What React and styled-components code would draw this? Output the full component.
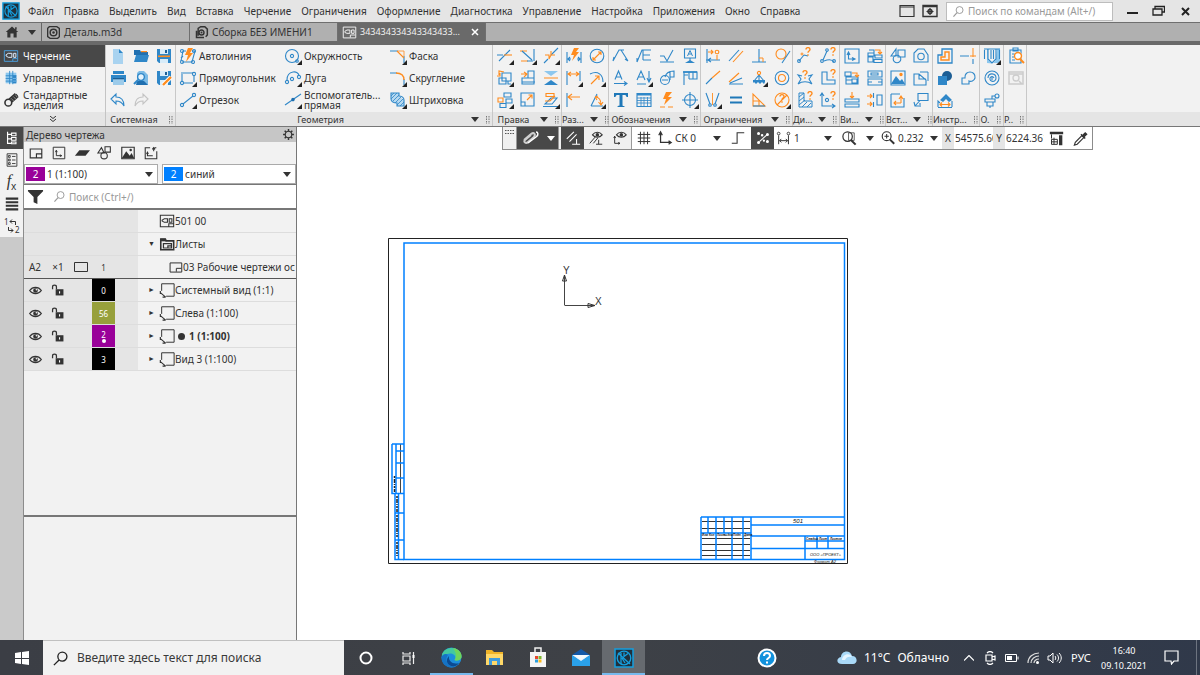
import React from 'react';
import styled, { createGlobalStyle, css } from 'styled-components';

const BLUE = '#2f87c8';
const SKY = '#a9d3f0';
const ORANGE = '#ff8c1e';
const INK = '#333333';
const LINE = '#0080ff';

const GlobalStyle = createGlobalStyle`
  * { box-sizing: border-box; }
  body {
    margin: 0;
    font-family: "Noto Sans", "Open Sans", sans-serif;
    font-size: 10px;
    line-height: 14px;
    color: ${INK};
  }
  button, input, select { font: inherit; color: inherit; }
`;

/* ---------- icon set ---------- */

const ring = (x, y, r) => `M${x - r} ${y}a${r} ${r} 0 1 0 ${2 * r} 0a${r} ${r} 0 1 0 ${-2 * r} 0`;
const box = (x, y, w, h) => `M${x} ${y}h${w}v${h}h${-w}z`;
const s = (stroke, d, width = 1.1) => ({ stroke, d, width, fill: 'none' });
const f = (fill, d) => ({ fill, d, stroke: 'none' });
const b = (d, w) => s(BLUE, d, w);
const o = (d, w) => s(ORANGE, d, w);
const k = (d, w) => s(INK, d, w);
const quest = (x, y) => o(`M${x} ${y + 1.5}c0-2.5 4-2.5 4 0c0 1.5-2 1.5-2 3.2M${x + 2} ${y + 6.2}v1.6`, 1.4);

const ICONS = {
  newFile: [f('#a9d3f0', 'M4 2h6l4 4v11H4z'), f(BLUE, 'M10 2l4 4h-4z')],
  open: [f('#1f6fb0', 'M2 3h6l1 2h7v3H2z'), f(BLUE, 'M4 8h13l-2 7H2z'), f(ORANGE, 'M9 4h6v1.2H9z')],
  save: [f(BLUE, 'M2 2h14v14H4l-2-2z'), f('#d8ecf9', 'M5 2h8v5H5z'), f('#1c5e95', 'M10 3h2v3h-2z'), f(ORANGE, 'M3 8.5h12v1.6H3z'), f('#d8ecf9', 'M5 12h8v4H5z')],
  saveAs: [f(BLUE, 'M2 2h14v14H4l-2-2z'), f('#d8ecf9', 'M5 2h8v5H5z'), f('#1c5e95', 'M10 3h2v3h-2z'), f('#d8ecf9', 'M5 11h8v5H5z'), s('#fff', 'M8 16L16 8', 4), o('M8 16L16 8', 2.4)],
  print: [f(BLUE, 'M4 2h11v3H4z'), f(BLUE, 'M2 6h15v7H2z'), f('#9ccbea', 'M4 10h11v6H4z'), f('#1c5e95', 'M4 9h11v1.3H4z')],
  preview: [f('#7cbbe6', 'M7 2h5l4 4v10H5V4z'), f('#1f6fb0', 'M5 12h7l4 4H4z'), f('#e5f3fc', ring(9, 8, 3.4)), b(ring(9, 8, 3.4), 1.4), b('M6 11l-4 4', 2)],
  undo: [b('M2 8l5-5v3c6 0 8 4 8 9c-2-4-4-5-8-5v3z')],
  redo: [s('#c4c4c4', 'M16 8l-5-5v3c-6 0-8 4-8 9c2-4 4-5 8-5v3z')],
  drafting: [s('#4b9fdc', box(1.5, 3, 15, 12)), s('#dfefff', 'M3.500 7.500l2.500-1.500h4v4.500H6L3.500 9zM12 6v4.500h2.500V6z'), s('#4b9fdc', 'M11 15v-3h5')],
  manage: [f('#8cc7ee', 'M3 3h12v12H3z'), b('M7.500 1v15M11 1v15M3 6.500h12M3 9.500h12M3 12.500h12', 1), f('#2f87c8', 'M11 6h4v9h-4z'), s('#8cc7ee', 'M11 9.500h4M11 12.500h4', 0.8)],
  standard: [s(INK, ring(6, 12, 3.8), 1.8), s(INK, 'M7 8l7-6M10 11l7-6', 2), s(INK, 'M9 9l7-6', 3), s('#999', 'M9 7l3 3M11.500 5l3 3M14 3l2 3', 0.9)],
  autoline: [b('M2 14L4 4h3M3 15h10l3-11h-3M4 9l-2 2'), b(ring(3, 4, 1.5)), b(ring(15, 4, 1.5)), b(ring(3, 15, 1.5)), b(ring(14, 15, 1.5)), f(ORANGE, 'M9 1h5l-3 5h3l-7 9l2-7H6z')],
  rect: [b('M2 4h12M3 5v8M5 14h9M15 6v7'), b(ring(3, 14, 1.6)), b(ring(15, 5, 1.6))],
  segment: [b('M4 13L14 5'), b(ring(3, 14, 1.6)), b(ring(15, 4, 1.6))],
  circle: [b(ring(8, 9, 6.5)), b(ring(8, 9, 1.6)), b(ring(13, 14, 1.3))],
  arc: [b('M3 11C3 1 15 1 15 7'), b(ring(3, 13, 1.6)), b(ring(15, 8, 1.6)), b(ring(8, 10, 1.6))],
  auxLine: [b('M1 14L17 3'), f('#1f6fb0', ring(9, 8.6, 1.8))],
  chamfer: [b('M1 4h8M15 9v7'), o('M8 4l7 7'), o('M9 4h6v5', 0.8)],
  fillet: [b('M1 4h7M15 10v6'), o('M7 4c5 0 8 2 8 7', 1.3)],
  hatch: [f('#b5d8f0', 'M2 2h8v3l5 4v6H8v-3c-3 0-6-1-6-4z'), b('M2 2h8v3c2 0 5 1 5 4v6H8v-3c-3 0-6-1-6-4z'), b('M2 5l3-3M2 8l6-6M4 10l6-6M6 12l6-6M8 14l6-6M11 15l4-4', 0.8)],
  trim: [b('M1 8h6M3 14L14 3'), o('M8 8h8')],
  extend: [o('M1 4h7M2 14h7'), b('M3 4l10 9M15 2v12M8 14h6')],
  split: [b('M2 16l4-4M9 8l7-7'), o('M3 8h4v4M9 4v4h4M7 12l2-4')],
  copyMove: [b('M6 4h9v8H6zM3 9h7v6H3z'), o('M3 6V2l5 1M1 7h3V4'), b('M12 12v3h3')],
  moveBy: [b('M9 2h6v13H3V9h6zM3 13h13M9 9h6'), o('M2 5h6M5 3l3 2-3 3')],
  mirror: [f('#8cc7ee', 'M2 2h14l-7 5z'), o('M2 9h14', 1), f(BLUE, 'M2 16h14l-7-5z')],
  array: [b('M8 2h7v4H8zM10 8h6v4h-6z'), o('M2 7h5v4H2z'), b('M4 12.500h6v4H4z')],
  scale: [b('M2 2h13v13H2zM2 11h4v4'), o('M8 9l5-5M9.500 4h3.500v3.500')],
  deform: [b('M1 15.500h15M3 13h7l5-6H9z'), o('M3 10h5l5-5M4 2.500h8v3H4z')],
  dimAuto: [b('M2 5v11M16 5v11M3 12h3M12 12h3M5 10l-2 2 2 2M13 10l2 2-2 2'), f(ORANGE, 'M9 1h5l-3 4h3l-7 9l2-6H6z')],
  diameter: [b(ring(9, 9, 6.8)), o('M5 13l8-8M5 10v3h3M10 5h3v3')],
  dimLinear: [b('M2 2v14M15 2v10'), o('M3 5h11M6 3L3 5l3 2M11 3l3 2-3 2')],
  dimRadius: [b('M2 5c8-4 13 1 13 8'), o('M3 15l8-8M7 7h4v4')],
  dimBase: [b('M2 2v14'), o('M3 6h12M7 3L3 6l4 3')],
  dimAngle: [b('M3 15L9 3M3 15h12'), o('M7 6c5 0 6 4 6 8M10.500 11l2.500 3 2-3M7 6l3-1M7 6l2 3')],
  leader: [b('M1 14L7 3h5M9 3l7 11M1 14l1-4M16 14l-3-2')],
  leaderE: [b('M2 15L7 3h9M8 3v10M8 8h7M8 13h8M2 15v-4')],
  rough: [b('M2 9h4l3 5L15 3M2 15h14')],
  datum: [b('M3.500 2h11v9h-11zM9 11v3'), f(BLUE, 'M4 16l5-3 5 3z'), b('M6.500 9L9 3.500 11.500 9M7.500 7h3', 1)],
  viewArrow: [b('M3 10.500L6.500 2 10 10.500M4 8h5'), b('M2 14.500h13M12 12.500l3 2-3 2')],
  textArrow: [b('M2 11L6 2l4 9M3.500 8h5M14 2v10M12 9l2 4 2-4M2 15h9')],
  node: [b(ring(7, 11, 4.5)), b('M4 11h6M7 8c1-4 5-6 9-6v6h-4M12 2v9')],
  table: [b('M3 16V3h13v7H8M8 3v7M12 3v7M3 6h4'), b('M2 3h14', 1.6)],
  text: [f('#1f78b8', 'M2 2h14v4h-1.500c-.2-1.500-1-2-2-2H10.500v10c0 1 .5 1 2 1.200V16h-7v-.8c1.500-.2 2-.2 2-1.200V4H5.500c-1 0-1.800.5-2 2H2z')],
  grid: [b('M2 2.500h14v13H2z'), f(BLUE, 'M2 2h14v2.500H2z'), b('M2 7h14M2 9.500h14M2 12h14M6 6v10M9 6v10M12.500 6v10', 0.8)],
  bolt: [f(ORANGE, 'M8 1h6l-4 5h4l-8 8l2-6H5z'), o('M2 16h5M10 16h5', 1)],
  target: [b(ring(9, 9, 5.5)), b('M9 1v16M1 9h16')],
  cDim: [b('M3 2v14M2 13h14M7 11l-3 2 3 2'), o('M4 5h5M7 3l2 2-2 2M13 8v5'), o(ring(13, 5, 1.8))],
  parallel: [b('M2 14L12 3'), o('M6 15L16 4')],
  perp: [b('M2 15h14M9 2v13'), o('M9 11h4v4', 1)],
  tangent: [o(ring(8, 7, 5)), b('M9 16L17 4')],
  coincide: [b('M2 15l6-6'), o('M8 9l8-7')],
  angle: [b('M2 15h14M3 14l12-5'), o('M2 13L12 4')],
  fix: [b('M4 12l5-6 5 6M9 6v5'), f(BLUE, 'M3 11h12v2l-1 2-2-2-2 2-2-2-2 2-2-2-1 1z'), o(ring(9, 4, 1.6))],
  concentric: [b(ring(9, 9, 6.8)), o(ring(9, 9, 3.5))],
  symmetry: [b('M2 2l4 11M15 2l-4 11'), b(ring(6, 14, 1.3)), b(ring(11, 14, 1.3)), s(ORANGE, 'M8.500 2v12', 0.9)],
  equal: [s('#1f78b8', 'M3 6.500h12M3 11.500h12', 2)],
  triangle: [o('M3 3v12h12zM3 10h6v5'), b('M3 15h12')],
  questCircle: [o(ring(9, 9, 7)), quest(7, 4), o('M4 14L14 4')],
  qPoint: [b('M3 14l5-6M8 8l4 1'), b(ring(3, 14, 1.4)), quest(10, 1), s(ORANGE, ring(6, 7, 1), 1)],
  qPath: [b('M4 13L8 4M5 14c5-2 8-2 10 1'), b(ring(3, 14, 1.4)), b(ring(8, 3, 1.3)), b(ring(15, 14, 1.4)), quest(12, 1)],
  qStar: [b('M2 15l3-5-3-4 4 1M16 15l-3-5 3-4-4 1M2 15c4-3 10-3 14 0'), quest(7, 2)],
  qShape: [b('M3 3h5v8h8v4H3z'), quest(12, 1)],
  qHatch: [b('M3 2h5v8h8v6H3zM3 6l5-4M3 10l5-4M3 14l6-5M6 16l5-5M11 16l4-4', 1), quest(12, 1)],
  qAxis: [b('M3 3v12h13M1 5l2-3 2 3M13 13l3 2-3 2'), b(ring(8, 9, 1.6)), quest(12, 1)],
  viewNew: [b('M2 2h14v14H2zM5.500 6v6h6M4 8l1.500-3L7 8M9 10.500l3 1.500-3 1.500')],
  views: [b('M2 6h6v3H2zM2 10h5v5H2zM9 8h7v3H9zM8 12.500h8v3H8zM3 3h5v3'), o('M9 3h5v3M12 5l2 2 2-2')],
  viewArrange: [b('M2 3h6v4H2zM3 8h12v7H3zM9 10h5v4H9zM3 11h6'), o('M9 4h5v3M12 6l2 2 2-2')],
  viewSection: [b('M2 2h14v6H2zM5 4h7v2H5zM2 10h14v6H2zM2 13h4M12 13h4')],
  align: [b('M2 8h14v3H2zM2 13h14v3H2z'), o('M9 1v6M7 5l2 2 2-2')],
  alignH: [b('M11 4h5v10h-5zM7.500 2v5M7.500 11v5'), o('M1 5h5M4 3l2 2-2 2M1 13h5M4 11l2 2-2 2')],
  shapes: [b('M2 9l5-7v7zM9 3h7v7H9z'), b(ring(8, 12, 3.8))],
  macro: [b('M2 15V6l4-4h6l4 6v7z'), b(ring(9, 9.5, 3.2))],
  picture: [b('M2 2h14v14H2z'), f(BLUE, 'M2 15l5-8 4 5 2-2 3 5z'), f(ORANGE, ring(12, 5.5, 1.7))],
  fragment: [b('M2 5h5l7 6v5H2zM7 5v5h7'), s(BLUE, 'M8 3h8v9', 1)],
  insertView: [b('M2 3h9M2 3v13h13V7'), o('M5 12h7M12 6v6M10 8l2-3 2 3M7 10l-2 2 2 2')],
  frameLead: [b('M6 2.500h10v7H6zM8 9.500L3 15M2 11l1 4h4M8 12v4')],
  equid: [b('M2 16V8h4V2h10v14z', 1.3), o('M5 13h8V5H9v5H5z', 1.4)],
  extendTo: [b('M1 9h9M14 12v5'), o('M14 1v9M11 9h6', 1)],
  union: [f('#1c5e95', ring(11, 7, 5)), f(BLUE, 'M2 7h9v9H2z')],
  contour: [b('M3 15V9h3c-1-8 11-8 10 0c-1 3-4 4-6 3v3z')],
  measure: [f(BLUE, 'M4 9l6-6 6 6-3 2-3-3-3 3z'), b('M2 16V10l2 2M16 16v-6M2 16.500h14'), o('M4 13.500h10M6 11.500l-2 2 2 2M12 11.500l2 2-2 2')],
  hole: [f('#8cc7ee', 'M1 2h3v14l5 .5L5 13V2zM14 2h3v14H10l3-3z'), b('M1 2h16M5 2v10l4 4 4-4V2M1.500 3v9M16.500 3v9M8 3v9M10.500 3v9')],
  spiral: [b(ring(9, 9, 7)), b('M5 9c0-6 8-5 8 0s-7 4-6 0c1-2 3-2 4 0M9 7v4')],
  shaft: [b('M2 8h10v3H2zM4 11v4h6v-4M7 15v2M9 8V5h3'), b(ring(14, 5, 2))],
  report: [b('M3 3h11v13H3zM6 1h5v3H6zM5 7h4M5 10h3M5 13h3'), f('#fff', ring(11, 9, 4)), o(ring(11, 9, 3.5), 1.4), o('M13 12l4 4', 2)],
  reportOff: [s('#cccccc', 'M2 3h14v12H2zM2 5h14M12 12l3 3', 1.5), s('#cccccc', ring(9, 9, 3), 1.3)],
  /* side panel and status strip */
  sheet: [k('M2.500 4.500h13v10h-13zM9.500 14v-4h6', 1.3)],
  boxAxis: [k('M2.500 2.500h13v13h-13zM6 6v6h6M5 8l1-2 1 2M10 11l2 1-2 1', 1.1)],
  layer: [f(INK, 'M6 6h12l-5 6H1z')],
  shapesK: [k('M1 9l4-6 3 6zM9 2h6v6H9z', 1.2), k(ring(8, 12, 3.6), 1.2)],
  pictureK: [k('M2 2.500h14v13H2z', 1.3), f(INK, 'M2 15l5-8 4 5 2-3 3 6z'), f(INK, ring(12, 5.5, 1.4))],
  insertK: [k('M8 3H2.500v12.500h13V7M5 9v3h6M4 10l1-2 1 2M12 7V3M10.500 5L12 3l1.500 2M13 3h2', 1.2)],
  gear: [k(ring(9, 9, 4.5), 1.5), k('M9 1.500v3M9 13.500v3M1.500 9h3M13.500 9h3M3.700 3.700l2 2M12.300 12.300l2 2M14.300 3.700l-2 2M5.700 12.300l-2 2', 2)],
  filter: [f(INK, 'M1 2h16v1.500l-6 6V17l-4-2V9.500l-6-6z')],
  search: [s('#999999', ring(10.5, 7, 4.8), 1.3), s('#999999', 'M7 10.500L2 16', 1.6)],
  treeTab: [s('#ffffff', 'M4 2v13h4M4 5h4M4 10h4', 1.3), s('#ffffff', 'M8.500 3.500h5v3h-5zM8.500 8.500h5v3h-5zM8.500 13.500h5v2h-5z', 1.2)],
  params: [k('M3.500 2h11v14h-11zM9 5h4M9 9h4M9 13h4', 1), k(box(5, 4, 2, 2), 1), k(box(5, 8, 2, 2), 1), k(box(5, 12, 2, 2), 1)],
  bars: [k('M2 3h14M2 7h14M2 11h14M2 15h14', 2.4)],
  doc: [k('M1.500 2.500h15v13h-15zM3.500 8L6 6.500h3.500v4H6L3.500 9zM11.500 6.500h3v4h-3zM11 15v-3h5', 1.2)],
  folder: [k('M2 3.500h5l1 2h8.500v10H2z', 1.8), k('M5 8.500h9v5H5zM10 13v-2h4', 1.4), f(INK, 'M2 3h6v3H2z')],
  page: [k('M2.500 3.500h14v11h-14zM10 14v-4h6', 1.2)],
  view: [k('M3 10V2h14v14H8', 1.1), k('M1.500 10v3.500M1.500 12l6 5M4 17h3.500', 1.3)],
  emptyBox: [k('M2.500 4.500h13v9h-13z', 1)],
  eye: [k('M2 9c3.500-5 10.500-5 14 0c-3.500 5-10.500 5-14 0z', 1.5), f(INK, ring(9, 9, 2.8)), f('#fff', ring(10, 8, 0.9))],
  lock: [k('M2 8V5c0-3 5-3 5 0v3', 1.6), f(INK, 'M6 8h10v8H6z'), f('#fff', 'M10.300 10.500h1.400v3h-1.400z')],
  clip: [s('#cfcfcf', 'M3 11l7-6c3-2 5 0 3 3l-6 5c-2 2-5 0-3-2l6-5', 2), s('#ffffff', 'M7 14l8-6c3-2 2-5 0-5', 1.5)],
  para: [s('#fff', 'M2 10L10 2M5 13l8-8M8 16h9M13 10v6', 1.2)],
  eyePara: [k('M2 15L8 8M6 15l5-6M9 16h7M12 11v5', 1.1), k('M5 5.500c3-4 8-4 11 0c-3 3.500-8 3.500-11 0z', 1.2), f(INK, ring(10.5, 5.5, 2))],
  eyeAxis: [k('M3 7v8h6M2 9l1-2 1 2M7 14l2 1-2 1', 1.1), k('M5 5.500c3-4 8-4 11 0c-3 3.500-8 3.500-11 0z', 1.2), f(INK, ring(10.5, 5.5, 2))],
  hash: [k('M5 2v14M9 2v14M13 2v14M2 5h14M2 9h14M2 13h14', 1.1)],
  axis: [k('M4 3v11h12M2 6l2-4 2 4M13 12l3 2-3 2', 1.4)],
  step: [k('M2 15h6V3h8', 1.2)],
  snap: [s('#fff', 'M5 13L14 5', 1.2), f('#fff', ring(4, 4, 1.7)), f('#fff', ring(8, 6, 1.4)), f('#fff', ring(4, 14, 1.7)), f('#fff', ring(14, 5, 1.7)), f('#fff', ring(14, 13, 1.7)), f('#fff', ring(10, 12, 1.3))],
  stepDim: [k('M3 6v10M14 6v10M4 12h9M6 10l-2 2 2 2M11 10l2 2-2 2', 1.1), k(ring(3, 4, 1.5), 1), k(ring(14, 4, 1.5), 1)],
  zoomArea: [k(ring(7, 7, 5), 1.3), k('M10.500 10.500l5 5', 2.2), k('M8 3h6v8H8z', 0.8)],
  zoomPlus: [k(ring(7.5, 7, 5), 1.3), k('M11 10.500l5 5', 2.2), k('M5 7h5M7.500 4.500v5', 1.2)],
  caliper: [f(INK, 'M1 1h16v3H1zM12 5h4v12h-4z'), k('M3 4v5M6 8v8M3 10h7v6H3zM3 13h7', 1.2)],
  dropper: [k('M2.500 16l1-3 7-7 2 2-7 7z', 1.2), f(INK, 'M9 5l1-1 1 1 3-3 2.500 2.500-3 3 1 1-1 1z')],
  cmdWindow: [k('M2 3.500h14v11H2zM2 5h14', 1.2)],
  cmdGear: [k('M2 3.500h14v11H2zM2 4.500h14', 1.4), k(ring(9, 9.5, 2), 1.4), k('M9 6v7M5.500 9.500h7', 1.2)],
  home: [f(INK, 'M9 2l8 7h-2v7h-4v-5H7v5H3V9H1zM13 3h2v3h-2z')],
  partFile: [k('M4 2h9l3 2v10l-2 2H5l-3-2V4z', 1.6), k(ring(9, 9, 4), 1.8), f(INK, ring(9, 9, 1.5))],
  asmFile: [k('M3 7v8h9M5 13V4l3-2h5l3 3v7l-2 2', 1.8), k(ring(9, 9, 3), 1.7), f(INK, ring(9, 9, 1.2))],
  drawFile: [s('#eeeeee', 'M1.500 2.500h15v13h-15zM3.500 7.500L6 6h3.500v4H6L3.500 9zM11.500 6h3v4h-3zM10 15v-3h6', 1.2)],
};

const Svg = styled.svg`
  display: block;
  flex: none;
`;

function Icon({ name, size = 18, corner }) {
  return (
    <Svg width={size} height={size} viewBox="0 0 18 18" aria-hidden="true">
      {ICONS[name].map((p, i) => (
        <path key={i} d={p.d} fill={p.fill} stroke={p.stroke} strokeWidth={p.width} />
      ))}
      {corner && <path d="M18 13v5h-5z" fill="#222222" />}
    </Svg>
  );
}

function Arrow({ color = INK }) {
  return (
    <Svg width="8" height="5" viewBox="0 0 8 5" aria-hidden="true">
      <path d="M0 0h8L4 5z" fill={color} />
    </Svg>
  );
}

function Grip() {
  return (
    <Svg width="5" height="8" viewBox="0 0 5 8" aria-hidden="true">
      <path d="M1.500 0v8M4 0v8" stroke="#777777" strokeDasharray="1.500 1" />
    </Svg>
  );
}

function KompasMark({ size }) {
  return (
    <Svg width={size} height={size} viewBox="0 0 20 20" aria-hidden="true">
      <rect x="1" y="1" width="18" height="18" fill="#20303c" stroke="#159fdf" strokeWidth="1.500" />
      <circle cx="10" cy="10" r="6.800" fill="none" stroke="#159fdf" strokeWidth="1.300" />
      <path d="M7 5v11M10 4.500v4l4-3M4 5l12 11M8 10l3 5" fill="none" stroke="#159fdf" strokeWidth="1.300" />
    </Svg>
  );
}

/* ---------- page frame ---------- */

const Screen = styled.div`
  display: flex;
  flex-direction: column;
  min-height: 100vh;
  background: #ffffff;
`;

const plain = css`
  display: flex;
  align-items: center;
  border: 0;
  padding: 0;
  background: none;
  text-align: left;
`;

const IconButton = styled.button`
  ${plain}
  justify-content: center;
  width: ${(p) => p.$w || 23}px;
  align-self: stretch;
  flex: none;
  background: ${(p) => (p.$dark ? '#484848' : 'none')};
  gap: 8px;
`;

/* ---------- menu and document tabs ---------- */

const MenuBar = styled.header`
  display: flex;
  align-items: center;
  height: 23px;
  padding: 0 1px 0 2px;
  background: #e5e5e5;
  border-bottom: 1px solid #6f6f6f;
`;

const Menu = styled.nav`
  display: flex;
  gap: 10px;
  margin-left: 8px;
  flex: 1;
`;

const MenuItem = styled.button`
  ${plain}
  white-space: nowrap;
`;

const CommandSearch = styled.label`
  display: flex;
  align-items: center;
  gap: 3px;
  width: 167px;
  height: 19px;
  margin: 0 5px;
  padding-left: 5px;
  background: #ffffff;
  border: 1px solid #bdbdbd;
`;

const PlainInput = styled.input`
  flex: 1;
  min-width: 0;
  width: 100%;
  border: 0;
  padding: 0;
  background: transparent;
  outline: 0;
  &::placeholder { color: #999999; opacity: 1; }
`;

const TabBar = styled.div`
  display: flex;
  height: 22px;
  background: #b0b0b0;
  border-bottom: 4px solid #6a6a6a;
`;

const HomeButton = styled.button`
  ${plain}
  width: 42px;
  padding-left: 5px;
  gap: 9px;
  border-right: 1px solid #666666;
`;

const DocTab = styled.button`
  ${plain}
  width: 148px;
  gap: 3px;
  padding: 0 6px 0 4px;
  white-space: nowrap;
  border-right: 1px solid #6f6f6f;
  background: ${(p) => (p.$active ? '#6a6a6a' : 'transparent')};
  color: ${(p) => (p.$active ? '#f2f2f2' : INK)};
`;

const TabName = styled.span`
  flex: 1;
  font-size: ${(p) => (p.$small ? 9 : 10)}px;
`;

/* ---------- ribbon ---------- */

const Ribbon = styled.div`
  display: flex;
  height: 82px;
  background: linear-gradient(#f2f2f2 67px, #e5e5e5 67px);
  border-bottom: 1px solid #777777;
`;

const Modes = styled.nav`
  display: flex;
  flex-direction: column;
  width: 106px;
  border-right: 1px solid #c4c4c4;
`;

const Mode = styled.button`
  ${plain}
  height: 22px;
  padding-left: 3px;
  gap: 4px;
  line-height: 10px;
  background: ${(p) => (p.$active ? '#484848' : 'none')};
  color: ${(p) => (p.$active ? '#ffffff' : INK)};
`;

const More = styled.button`
  ${plain}
  justify-content: center;
  flex: 1;
`;

const Group = styled.section`
  display: flex;
  flex-direction: column;
  flex: none;
  width: ${(p) => p.$w}px;
  border-right: 1px solid #c8c8c8;
`;

const GroupGrid = styled.div`
  display: grid;
  grid-template-columns: repeat(${(p) => p.$cols}, 23px);
  grid-auto-rows: 22px;
  height: 67px;
`;

const Commands = styled.div`
  display: grid;
  grid-template-columns: repeat(3, 105px);
  grid-auto-rows: 22px;
  height: 67px;
  padding-left: 3px;
`;

const Command = styled.button`
  ${plain}
  gap: 2px;
  line-height: 10px;
`;

const GroupFoot = styled.div`
  display: flex;
  align-items: center;
  flex: 1;
  gap: 6px;
  padding: 1px 2px 0 0;
  font-size: 9px;
  line-height: 12px;
`;

const GroupName = styled.span`
  flex: 1;
  text-align: center;
  white-space: nowrap;
`;

/* ---------- workspace ---------- */

const Workspace = styled.main`
  display: flex;
  flex: 1;
`;

const Rail = styled.nav`
  width: 24px;
  flex: none;
  background: #cacaca;
  border-right: 1px solid #8c8c8c;
`;

const RailButton = styled.button`
  ${plain}
  justify-content: center;
  width: 100%;
  height: 22px;
  background: ${(p) => (p.$active ? '#484848' : '#f2f2f2')};
`;

const Fx = styled.span`
  font: italic 16px/18px "Liberation Serif", serif;
  > sub { font: 10px/10px "Noto Sans", sans-serif; }
`;

const SidePanel = styled.aside`
  display: flex;
  flex-direction: column;
  width: 273px;
  flex: none;
  background: #f2f2f2;
  border-right: 1px solid #777777;
`;

const PanelHead = styled.div`
  display: flex;
  align-items: center;
  justify-content: space-between;
  height: 15px;
  padding: 0 1px 0 2px;
  background: #c6c6c6;
`;

const GearButton = styled.button`
  ${plain}
`;

const PanelTools = styled.div`
  display: flex;
  height: 22px;
`;

const PickerRow = styled.div`
  display: grid;
  grid-template-columns: 134px 1fr;
  gap: 4px;
  height: 21px;
  border-bottom: 1px solid #777777;
`;

const Picker = styled.label`
  display: flex;
  align-items: center;
  padding: 0 4px 0 1px;
  border: 1px solid #aaaaaa;
  background: #ffffff;
`;

const Swatch = styled.span`
  width: 19px;
  height: 14px;
  background: ${(p) => p.$c};
  color: #ffffff;
  text-align: center;
`;

const PlainSelect = styled.select`
  appearance: none;
  flex: 1;
  min-width: 0;
  border: 0;
  padding: 0 0 0 2px;
  background: transparent;
  outline: 0;
`;

const FilterRow = styled.div`
  display: flex;
  align-items: center;
  height: 25px;
  background: #ffffff;
  border-bottom: 2px solid #777777;
`;

const FilterLabel = styled.label`
  display: flex;
  flex: 1;
  align-items: center;
  gap: 3px;
  padding-left: 6px;
`;

const Tree = styled.ul`
  list-style: none;
  margin: 0;
  padding: 0;
  height: 307px;
  border-bottom: 2px solid #777777;
`;

const TreeRow = styled.li`
  display: flex;
  height: 23px;
  border-bottom: 1px solid ${(p) => (p.$rule ? '#555555' : '#dddddd')};
  font-weight: ${(p) => (p.$bold ? 700 : 400)};
`;

const Cells = styled.div`
  display: grid;
  grid-template-columns: 22px 24px 22px 23px;
  align-items: center;
  justify-items: center;
  width: 114px;
  flex: none;
  background: #e5e5e5;
`;

const ColourCell = styled.span`
  display: flex;
  flex-direction: column;
  align-items: center;
  justify-content: center;
  align-self: stretch;
  width: 23px;
  background: ${(p) => p.$c || 'none'};
  color: ${(p) => (p.$c ? '#ffffff' : INK)};
  font-size: 8px;
  line-height: 9px;
  font-weight: 400;
`;

const Dot = styled.i`
  width: 4px;
  height: 4px;
  border-radius: 2px;
  background: #ffffff;
`;

const CurrentMark = styled.i`
  width: 7px;
  height: 7px;
  margin: 0 4px 0 3px;
  border-radius: 4px;
  background: ${INK};
`;

const Name = styled.div`
  display: flex;
  align-items: center;
  flex: 1;
  min-width: 0;
  overflow: hidden;
  white-space: nowrap;
  padding-left: ${(p) => p.$indent}px;
`;

const Twist = styled.span`
  width: 11px;
  font-size: 7px;
`;

/* ---------- canvas ---------- */

const Canvas = styled.section`
  display: flex;
  flex-direction: column;
  align-items: flex-start;
  flex: 1;
  min-width: 0;
`;

const Strip = styled.div`
  display: flex;
  align-items: stretch;
  height: 23px;
  margin: 0 0 88px 205px;
  background: #ffffff;
  border: 1px solid #8c8c8c;
  border-top: 0;
`;

const StripGroup = styled.div`
  display: flex;
  background: ${(p) => (p.$grey ? '#f0f0f0' : 'none')};
  border-right: 1px solid #999999;
`;

const StripPick = styled.label`
  display: flex;
  align-items: center;
  width: ${(p) => p.$w}px;
  padding: 0 4px 0 2px;
`;

const Axis = styled.label`
  display: flex;
  align-items: center;
  width: 51px;
  > span { align-self: stretch; width: 12px; padding-top: 4px; background: #e5e5e5; text-align: center; }
  > input { padding-left: 1px; }
`;

const Sheet = styled.svg`
  display: block;
  margin-left: 91px;
  font-family: "Liberation Sans", sans-serif;
`;

/* ---------- taskbar ---------- */

const Taskbar = styled.footer`
  display: flex;
  align-items: stretch;
  height: 35px;
  color: #ffffff;
  font-size: 12px;
  background: linear-gradient(90deg, #3b3e45, #3e4146 50%, #30394a);
`;

const TaskButton = styled.button`
  ${plain}
  justify-content: center;
  width: 43px;
  flex: none;
  border-bottom: 2px solid ${(p) => (p.$open ? '#76b9ed' : 'transparent')};
  border-top: 2px solid transparent;
  background: ${(p) => (p.$active ? '#666a6f' : 'none')};
`;

const TaskSearch = styled.label`
  display: flex;
  align-items: center;
  gap: 8px;
  width: 301px;
  padding-left: 9px;
  background: #f2f2f2;
  border-top: 1px solid #c0c0c0;
  color: ${INK};
  > input::placeholder { color: #3a3a3a; }
`;

const Tray = styled.div`
  display: flex;
  align-items: center;
  margin: 0 3px 0 auto;
  padding-right: 4px;
  border-right: 1px solid #6d7480;
`;

const TrayItem = styled.button`
  ${plain}
  justify-content: center;
  width: ${(p) => p.$w}px;
  height: 100%;
  gap: 7px;
  white-space: nowrap;
  font-size: ${(p) => (p.$small ? 11 : 12)}px;
`;

const Clock = styled.time`
  width: 52px;
  text-align: center;
  font-size: 9px;
  line-height: 15px;
`;

/* ---------- data ---------- */

const MENU = ['Файл', 'Правка', 'Выделить', 'Вид', 'Вставка', 'Черчение', 'Ограничения', 'Оформление', 'Диагностика', 'Управление', 'Настройка', 'Приложения', 'Окно', 'Справка'];

const COMMANDS = [
  ['autoline', 'Автолиния', false], ['circle', 'Окружность', true], ['chamfer', 'Фаска', true],
  ['rect', 'Прямоугольник', true], ['arc', 'Дуга', true], ['fillet', 'Скругление', true],
  ['segment', 'Отрезок', true], ['auxLine', 'Вспомогатель...\nпрямая', true], ['hatch', 'Штриховка', true],
];

/* an asterisk marks a command with variants behind it */
const GROUPS = [
  { name: 'Правка', w: 69, cols: 3, menu: true, icons: 'trim* extend* split* copyMove* moveBy mirror array* scale deform*' },
  { name: 'Раз...', w: 47, cols: 2, menu: true, icons: 'dimAuto diameter dimLinear* dimRadius* dimBase dimAngle*' },
  { name: 'Обозначения', w: 92, cols: 4, menu: true, icons: 'leader leaderE rough datum viewArrow textArrow* node table text grid bolt target*' },
  { name: 'Ограничения', w: 92, cols: 4, menu: true, icons: 'cDim parallel perp tangent coincide angle fix* concentric symmetry* equal triangle questCircle*' },
  { name: 'Ди...', w: 47, cols: 2, menu: true, icons: 'qPoint qPath qStar qShape qHatch qAxis' },
  { name: 'Ви...', w: 46, cols: 2, menu: true, icons: 'viewNew views viewArrange viewSection align alignH' },
  { name: 'Вст...', w: 47, cols: 2, menu: true, icons: 'shapes macro picture fragment insertView frameLead' },
  { name: 'Инстр...', w: 47, cols: 2, icons: 'equid extendTo union contour measure' },
  { name: 'О.', w: 24, cols: 1, icons: 'hole* spiral shaft' },
  { name: 'Р..', w: 23, cols: 1, icons: 'report reportOff' },
];

const VIEWS = [
  { n: '0', c: '#000000', name: 'Системный вид (1:1)' },
  { n: '56', c: '#97a03c', name: 'Слева (1:100)' },
  { n: '2', c: '#990099', name: '1 (1:100)', current: true },
  { n: '3', c: '#000000', name: 'Вид 3 (1:100)' },
];

function IconGroup({ name, w, cols, menu, icons }) {
  return (
    <Group $w={w} aria-label={name}>
      <GroupGrid $cols={cols}>
        {icons.split(' ').map((key) => {
          const id = key.replace('*', '');
          return (
            <IconButton key={key} aria-label={id}>
              <Icon name={id} corner={key.endsWith('*')} />
            </IconButton>
          );
        })}
      </GroupGrid>
      <GroupFoot>
        <GroupName>{name}</GroupName>
        {menu && <Arrow />}
        <Grip />
      </GroupFoot>
    </Group>
  );
}

function Drawing() {
  return (
    <Sheet width="461" height="328" viewBox="388 238 461 328" role="img" aria-label="Чертёж">
      <g fill="none">
        <path d="M388.500 238.500h459v325h-459z" stroke="#222222" />
        <path d="M400.500 444v50" stroke="#444444" />
        <path d="M404 243h440.500v316.500H404z" stroke={LINE} strokeWidth="1.500" />
        <path d="M392 444h12M392 444v49.500h12M396 444v49.500M396 451h8M396 463h8M396 478h8M395 494v65.500h9M398.500 494v65.500M395 513h9M395 540h9" stroke={LINE} strokeWidth="1.500" />
        <path d="M394.500 476v16M397 496v16M397 515v22M397 542v14" stroke="#222222" strokeWidth="1.500" strokeDasharray="2 1 4 1 1 1" />
        <path d="M702 521.500h48M702 528.500h48M702 538.500h48M702 544.500h48M702 550.500h48M702 555.500h48" stroke="#333333" />
        <path d="M701 517h143.500M701 517v42.500M708 517v16M716 517v42.500M724 517v16M732 517v42.500M743 517v42.500M751 517v42.500M701 533h50M751 525h93M751 536h93M751 548.500h93M805 536v23M805 541h39M817 536v12.500M828 536v12.500" stroke={LINE} strokeWidth="1.500" />
        <path d="M564.500 305V275M564.500 305.500h30" stroke="#444444" />
        <path d="M562.500 281l2-6 2 6zM588 303.500l7 2-7 2z" stroke="#333333" />
      </g>
      <g fill="#111111" fontStyle="italic">
        <text x="793" y="523" fontSize="6">501</text>
        <g fontSize="3" fontWeight="700">
          <text x="702" y="536">Изм</text>
          <text x="709" y="536">Кол</text>
          <text x="717" y="536">Лист</text>
          <text x="724" y="536">№док</text>
          <text x="733" y="536">Подп.</text>
          <text x="744" y="536">Дата</text>
          <text x="806" y="540">Стадия</text>
          <text x="819" y="540">Лист</text>
          <text x="830" y="540">Листов</text>
        </g>
        <text x="810" y="556" fontSize="4">ООО «ПРОЕКТ»</text>
        <text x="814" y="563" fontSize="4">Формат А2</text>
      </g>
      <g fill="#333333" fontSize="10">
        <text x="563" y="274">Y</text>
        <text x="595" y="305">X</text>
      </g>
    </Sheet>
  );
}

export default function App() {
  return (
    <Screen>
      <GlobalStyle />
      <MenuBar>
        <KompasMark size={18} />
        <Menu aria-label="Меню">
          {MENU.map((m) => <MenuItem key={m}>{m}</MenuItem>)}
        </Menu>
        <IconButton aria-label="Окно команд"><Icon name="cmdWindow" /></IconButton>
        <IconButton aria-label="Настройка окна"><Icon name="cmdGear" /></IconButton>
        <CommandSearch>
          <Icon name="search" size={13} />
          <PlainInput placeholder="Поиск по командам (Alt+/)" aria-label="Поиск по командам" />
        </CommandSearch>
        <IconButton $w={27} aria-label="Свернуть">
          <Svg width="12" height="12"><path d="M1 8h11" stroke="#222222" strokeWidth="2" /></Svg>
        </IconButton>
        <IconButton $w={27} aria-label="Восстановить">
          <Svg width="13" height="12"><path d="M1 4h9v6H1zM3 4V1.500h9.500V7H10" fill="none" stroke="#222222" strokeWidth="1.300" /></Svg>
        </IconButton>
        <IconButton $w={27} aria-label="Закрыть">
          <Svg width="9" height="9"><path d="M1 1l7 7M8 1L1 8" stroke="#222222" strokeWidth="2" /></Svg>
        </IconButton>
      </MenuBar>

      <TabBar>
        <HomeButton aria-label="Главная"><Icon name="home" size={14} /><Arrow /></HomeButton>
        <DocTab><Icon name="partFile" size={15} /><TabName>Деталь.m3d</TabName></DocTab>
        <DocTab><Icon name="asmFile" size={15} /><TabName>Сборка БЕЗ ИМЕНИ1</TabName></DocTab>
        <DocTab $active>
          <Icon name="drawFile" size={15} />
          <TabName $small>343434334343343433...</TabName>
          <Svg width="8" height="8"><path d="M1 1l6 6M7 1L1 7" stroke="#ffffff" strokeWidth="1.500" /></Svg>
        </DocTab>
      </TabBar>

      <Ribbon>
        <Modes aria-label="Наборы">
          <Mode $active><Icon name="drafting" size={16} />Черчение</Mode>
          <Mode><Icon name="manage" size={16} />Управление</Mode>
          <Mode><Icon name="standard" size={16} />Стандартные<br />изделия</Mode>
          <More aria-label="Ещё">
            <Svg width="6" height="6"><path d="M0 0l3 2.500L6 0M0 3l3 2.500L6 3" fill="none" stroke={INK} /></Svg>
          </More>
        </Modes>
        <IconGroup name="Системная" w={70} cols={3} icons="newFile open save print preview saveAs undo redo" />
        <Group $w={317} aria-label="Геометрия">
          <Commands>
            {COMMANDS.map(([id, label, corner]) => (
              <Command key={id}>
                <Icon name={id} size={18} corner={corner} />
                <span>{label.split('\n').map((t, i) => <React.Fragment key={t}>{i > 0 && <br />}{t}</React.Fragment>)}</span>
              </Command>
            ))}
          </Commands>
          <GroupFoot><GroupName>Геометрия</GroupName><Arrow /><Grip /></GroupFoot>
        </Group>
        {GROUPS.map((g) => <IconGroup key={g.name} {...g} />)}
      </Ribbon>

      <Workspace>
        <Rail aria-label="Панели">
          <RailButton $active aria-label="Дерево"><Icon name="treeTab" size={16} /></RailButton>
          <RailButton aria-label="Параметры"><Icon name="params" size={16} /></RailButton>
          <RailButton aria-label="Переменные"><Fx>f<sub>x</sub></Fx></RailButton>
          <RailButton aria-label="Слои"><Icon name="bars" size={16} /></RailButton>
          <RailButton aria-label="Порядок">
            <Svg width="20" height="20" viewBox="0 0 20 20">
              <path d="M8 5.500h5.500V9M10 3.500l-2 2 2 2M6.500 11v3.500H11M9 12.500l2 2-2 2" fill="none" stroke={INK} />
              <text x="2" y="9" fontSize="8" fill={INK}>1</text>
              <text x="13" y="17" fontSize="8" fill={INK}>2</text>
            </Svg>
          </RailButton>
        </Rail>

        <SidePanel>
          <PanelHead>
            Дерево чертежа
            <GearButton aria-label="Настройка панели"><Icon name="gear" size={13} /></GearButton>
          </PanelHead>
          <PanelTools>
            {['sheet', 'boxAxis', 'layer', 'shapesK', 'pictureK', 'insertK'].map((n) => (
              <IconButton key={n} aria-label={n}><Icon name={n} size={16} /></IconButton>
            ))}
          </PanelTools>
          <PickerRow>
            <Picker>
              <Swatch $c="#990099">2</Swatch>
              <PlainSelect aria-label="Вид"><option>1 (1:100)</option></PlainSelect>
              <Arrow />
            </Picker>
            <Picker>
              <Swatch $c="#0080ff">2</Swatch>
              <PlainSelect aria-label="Цвет"><option>синий</option></PlainSelect>
              <Arrow />
            </Picker>
          </PickerRow>
          <FilterRow>
            <IconButton aria-label="Фильтр"><Icon name="filter" size={17} /></IconButton>
            <FilterLabel>
              <Icon name="search" size={13} />
              <PlainInput placeholder="Поиск (Ctrl+/)" aria-label="Поиск" />
            </FilterLabel>
          </FilterRow>
          <Tree role="tree" aria-label="Дерево чертежа">
            <TreeRow role="treeitem"><Cells /><Name $indent={21}><Icon name="doc" size={16} />501 00</Name></TreeRow>
            <TreeRow role="treeitem"><Cells /><Name $indent={10}><Twist>▼</Twist><Icon name="folder" size={16} />Листы</Name></TreeRow>
            <TreeRow role="treeitem" $rule>
              <Cells><span>А2</span><span>×1</span><Icon name="emptyBox" size={18} /><ColourCell>1</ColourCell></Cells>
              <Name $indent={30}><Icon name="page" size={15} />03 Рабочие чертежи ос</Name>
            </TreeRow>
            {VIEWS.map((v) => (
              <TreeRow key={v.name} role="treeitem" $bold={v.current}>
                <Cells>
                  <Icon name="eye" size={15} /><Icon name="lock" size={14} /><span />
                  <ColourCell $c={v.c}>{v.n}{v.current && <Dot />}</ColourCell>
                </Cells>
                <Name $indent={10}><Twist>►</Twist><Icon name="view" size={16} />{v.current && <CurrentMark />}{v.name}</Name>
              </TreeRow>
            ))}
          </Tree>
        </SidePanel>

        <Canvas>
          <Strip>
            <StripGroup $grey>
              <IconButton $w={13} aria-label="Переместить">
                <Svg width="10" height="18"><path d="M0 1.500h10M0 4.500h10" stroke="#555555" strokeDasharray="1.500 1" /></Svg>
              </IconButton>
            </StripGroup>
            <StripGroup><IconButton $w={41} $dark aria-label="Привязки"><Icon name="clip" size={18} /><Arrow color="#ffffff" /></IconButton></StripGroup>
            <StripGroup $grey>
              <IconButton $w={2} as="span" />
              <IconButton $w={23} $dark aria-label="Параметризация"><Icon name="para" size={16} /></IconButton>
              <IconButton $w={24} aria-label="Показать ограничения"><Icon name="eyePara" size={16} /></IconButton>
              <IconButton $w={23} aria-label="Показать степени свободы"><Icon name="eyeAxis" size={16} /></IconButton>
            </StripGroup>
            <IconButton $w={23} aria-label="Сетка"><Icon name="hash" size={16} /></IconButton>
            <StripPick $w={70}>
              <Icon name="axis" size={16} />
              <PlainSelect aria-label="Система координат"><option>СК 0</option></PlainSelect>
              <Arrow />
            </StripPick>
            <IconButton $w={26} aria-label="Орто"><Icon name="step" size={16} /></IconButton>
            <IconButton $w={23} $dark aria-label="Округление"><Icon name="snap" size={16} /></IconButton>
            <StripPick $w={62}>
              <Icon name="stepDim" size={16} />
              <PlainSelect aria-label="Шаг"><option>1</option></PlainSelect>
              <Arrow />
            </StripPick>
            <IconButton $w={42} aria-label="Показать область"><Icon name="zoomArea" size={17} /><Arrow /></IconButton>
            <StripPick $w={64}>
              <Icon name="zoomPlus" size={16} />
              <PlainSelect aria-label="Масштаб"><option>0.232</option></PlainSelect>
              <Arrow />
            </StripPick>
            <Axis><span>X</span><PlainInput defaultValue="54575.601" /></Axis>
            <Axis><span>Y</span><PlainInput defaultValue="6224.361" /></Axis>
            <IconButton $w={24} aria-label="Измерить"><Icon name="caliper" size={15} /></IconButton>
            <IconButton $w={24} aria-label="Копировать свойства"><Icon name="dropper" size={17} /></IconButton>
          </Strip>
          <Drawing />
        </Canvas>
      </Workspace>

      <Taskbar>
        <TaskButton aria-label="Пуск">
          <Svg width="14" height="14"><path d="M0 2l6-1v6H0zM7 1l7-1v7H7zM0 8h6v5l-6-1zM7 8h7v6l-7-1z" fill="#ffffff" /></Svg>
        </TaskButton>
        <TaskSearch>
          <Svg width="17" height="17" viewBox="0 0 18 18"><path d={`${ring(11, 7, 4.8)}M7.500 10.500L2 16`} fill="none" stroke="#222222" strokeWidth="1.400" /></Svg>
          <PlainInput placeholder="Введите здесь текст для поиска" aria-label="Поиск Windows" />
        </TaskSearch>
        <TaskButton aria-label="Кортана">
          <Svg width="14" height="14"><circle cx="7" cy="7" r="5.500" fill="none" stroke="#ffffff" strokeWidth="2" /></Svg>
        </TaskButton>
        <TaskButton aria-label="Представление задач">
          <Svg width="14" height="14"><path d="M1 1v2h7V1M1 5h7v5H1zM1 14v-2h7v2M11.500 1v12" fill="none" stroke="#eeeeee" strokeWidth="1.200" /><path d="M10.500 4h2v3h-2z" fill="#ffffff" /></Svg>
        </TaskButton>
        <TaskButton $open aria-label="Edge">
          <Svg width="21" height="21" viewBox="0 0 21 21">
            <circle cx="10.500" cy="10.500" r="10" fill="#1c8fdc" />
            <path d="M1 8C3-2 20-1 20.500 9c0 5-5 5-7 4 3-4-2-8-7-6-3 0-5 1-5.500 3z" fill="#43c9a0" />
            <path d="M12 1c6 1 9 5 8.500 9-1 4-5 4-7 3 3-4 1-8-1.500-12z" fill="#6fd55c" />
            <path d="M7 8c-4 5 0 12 7 12C6 22 0 17 .5 10 2 7 5 6 7 8z" fill="#1673c4" />
            <path d="M8 9c-1 5 4 9 10 7-2 3-5 4-8 3-5-2-5-7-2-10z" fill="#0c4a91" />
          </Svg>
        </TaskButton>
        <TaskButton aria-label="Проводник">
          <Svg width="19" height="17"><path d="M1 1h6l2 2h9v13H1z" fill="#f0b429" /><path d="M1 5h17v11H1z" fill="#ffd868" /><path d="M4 9h11v7h-3v-4H7v4H4z" fill="#3f9bdc" /></Svg>
        </TaskButton>
        <TaskButton aria-label="Магазин">
          <Svg width="18" height="21"><path d="M6 5V1h6v4" fill="none" stroke="#eeeeee" strokeWidth="1.500" /><path d="M1 5h16v15H1z" fill="#f5f5f5" /><path d="M6 9h3v3H6z" fill="#e8482c" /><path d="M9.500 9h3v3h-3z" fill="#7cb82f" /><path d="M6 12.500h3v3H6z" fill="#2a9fe0" /><path d="M9.500 12.500h3v3h-3z" fill="#fbb91c" /></Svg>
        </TaskButton>
        <TaskButton aria-label="Почта">
          <Svg width="20" height="19"><path d="M1 7l9-6 9 6v3H1z" fill="#1459a8" /><path d="M1 7h18l-9 7z" fill="#e8f3fb" /><path d="M1 7l9 6 9-6v11H1z" fill="#2aa1ea" /><path d="M3 7h14l-7 5z" fill="#f4f9fd" /></Svg>
        </TaskButton>
        <TaskButton $open $active aria-label="КОМПАС"><KompasMark size={20} /></TaskButton>
        <Tray>
          <TrayItem $w={120} aria-label="Справка">
            <Svg width="20" height="20"><circle cx="10" cy="10" r="8.500" fill="#1291dc" stroke="#ffffff" strokeWidth="2" /><path d="M7 8c0-4 6-4 6 0 0 2-3 2-3 4M10 13.500v2" fill="none" stroke="#ffffff" strokeWidth="2" /></Svg>
          </TrayItem>
          <TrayItem $w={132}>
            <Svg width="20" height="15"><path d="M5 14C-1 14-1 8 4 7c0-6 9-8 11-1 6 0 6 8 1 8z" fill="#a9d9f8" /><path d="M5 10c0-6 8-8 10-3-3-1-6 0-7 3z" fill="#e6f5ff" /></Svg>
            <span>11°C</span><span>Облачно</span>
          </TrayItem>
          <TrayItem $w={20} aria-label="Скрытые значки"><Svg width="10" height="6"><path d="M0 5.500l5-5 5 5" fill="none" stroke="#ffffff" strokeWidth="1.200" /></Svg></TrayItem>
          <TrayItem $w={22} aria-label="Собрание"><Svg width="12" height="14"><path d="M2 4h6v6H2zM8 6l3-1v4L8 8M3 2c2-2 4-2 6 0M3 12c2 2 4 2 6 0" fill="none" stroke="#ffffff" strokeWidth="1.200" /></Svg></TrayItem>
          <TrayItem $w={22} aria-label="Батарея"><Svg width="14" height="8"><path d="M.5 .5h11v7H.5zM13 2.500v3" fill="none" stroke="#ffffff" /><path d="M2 2h5v4H2z" fill="#ffffff" /></Svg></TrayItem>
          <TrayItem $w={21} aria-label="Сеть"><Svg width="13" height="12"><path d="M1 11C1 5 6 1 12 1M4 11c0-4 4-7 8-7M7 11c0-2 2-4 5-4" fill="none" stroke="#dddddd" strokeWidth="1.200" /><circle cx="10.500" cy="10.500" r="1.500" fill="#ffffff" /></Svg></TrayItem>
          <TrayItem $w={20} aria-label="Звук"><Svg width="15" height="12"><path d="M1 4h2l3-3v10L3 8H1zM8 4c1 1 1 3 0 4M10 2.500c2 2 2 5 0 7M12 1c3 3 3 7 0 10" fill="none" stroke="#ffffff" /></Svg></TrayItem>
          <TrayItem $w={34} $small>РУС</TrayItem>
          <Clock>16:40<br />09.10.2021</Clock>
          <TrayItem $w={42} aria-label="Уведомления"><Svg width="15" height="15"><path d="M1 1h13v10h-4l-2.500 3L7 11H1z" fill="none" stroke="#ffffff" strokeWidth="1.200" /></Svg></TrayItem>
        </Tray>
      </Taskbar>
    </Screen>
  );
}
